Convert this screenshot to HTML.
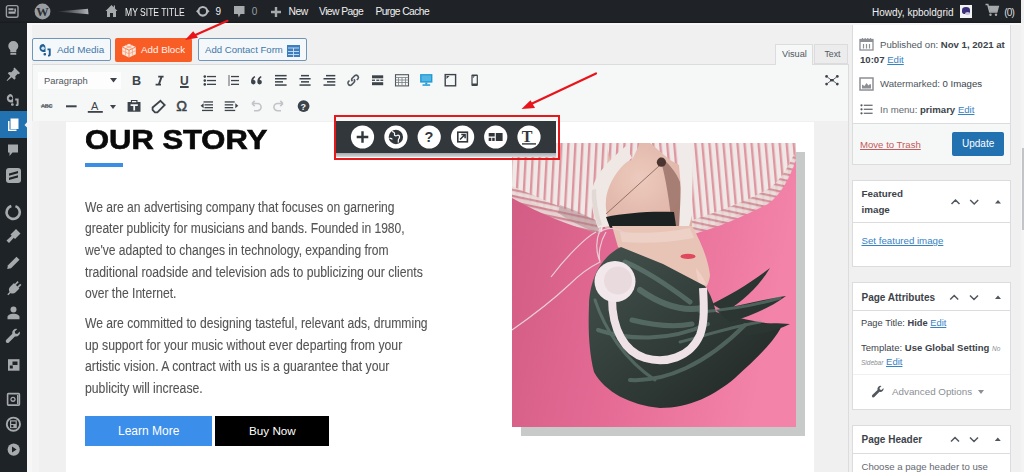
<!DOCTYPE html>
<html><head><meta charset="utf-8">
<style>
*{margin:0;padding:0;box-sizing:border-box}
html,body{width:1024px;height:472px;overflow:hidden;background:#f0f0f1;font-family:"Liberation Sans",sans-serif;color:#3c434a;position:relative}
.a{position:absolute}
.t{position:absolute;white-space:nowrap;line-height:1}
.ab{color:#f0f0f1;font-size:10px}
.btn{position:absolute;border:1.3px solid #6f95b8;border-radius:2px;background:#f5f8fa;color:#2271b1;font-size:9.8px}
.panel{position:absolute;left:852px;width:159px;background:#fff;border:1px solid #dcdcde}
.ph{font-weight:bold;font-size:10px;color:#1d2327}
.lnk{color:#2271b1;text-decoration:underline}
.ptxt{font-size:13.8px;color:#545454;transform-origin:0 0;-webkit-text-stroke:0.1px #555}
svg{overflow:visible}
</style></head><body>
<!-- SIDEBAR -->
<div class="a" style="left:0;top:23px;width:27px;height:449px;background:#1d2327"></div>
<div class="a" style="left:0;top:111px;width:27px;height:27px;background:#2271b1"></div>
<svg class="a" style="left:0;top:0;z-index:5" width="27" height="472" viewBox="0 0 27 472">
 <g fill="#a7aaad">
  <!-- bulb -->
  <path d="M13.3 41a5 5 0 0 0-5 5c0 2 1.2 3 2 4.3v2h6v-2c.8-1.3 2-2.3 2-4.3a5 5 0 0 0-5-5z"/>
  <rect x="10.3" y="53" width="6" height="1.8" rx="0.6"/>
  <!-- pin -->
  <path d="M14.5 67.5l5.5 5.5-1.2 1.2-1-.4-2.5 2.5.3 2.2-1.3 1.3-2.6-2.6-4.5 3.8-.6-.6 3.8-4.5-2.6-2.6 1.3-1.3 2.2.3 2.5-2.5-.4-1z"/>
  <!-- media -->
  <path d="M11 94a4.2 4.2 0 0 0-4.2 4.2c0 2.3 1.7 4 3.7 4.2h2.6v-4.2a4.2 4.2 0 0 0-2.1-4.2z"/>
  <rect x="11" y="103.2" width="2.7" height="2.6" rx="1"/>
  <path d="M15.2 98.6h3.4v6c0 1-.6 1.5-1.6 1.5h-1.2v-1.8h.9v-3.9h-1.5z"/>
  <!-- comment -->
  <path d="M8 144.5h10v8h-5.5l-3 3.5v-3.5H8z"/>
  <!-- S box -->
  <rect x="6" y="168" width="15" height="15" rx="3"/>
  <!-- ring -->
  <circle cx="13.2" cy="212.3" r="6.6" fill="none" stroke="#a7aaad" stroke-width="2.6" stroke-dasharray="37 4.5" transform="rotate(-70 13.2 212.3)"/>
  <!-- brush -->
  <path d="M16 229l4.5 4.5-5.5 5.5-1.2-1.2-4.8 5.2-2.5-2.5 5.2-4.8-1.2-1.2z"/>
  <!-- pencil -->
  <path d="M16.5 256.8l3 3-8.5 8.5-3.8.8.8-3.8z"/>
  <!-- plugin -->
  <path d="M17.5 281l1.2 1.2-2.8 2.8 1.5 1.5 2.8-2.8 1.2 1.2-2.8 2.8.8.8-4 4c-1.5 1.5-3.5 1.3-4.8.4l-2.3 2.3-1-1 2.3-2.3c-.9-1.3-1.1-3.3.4-4.8l4-4 .8.8z"/>
  <!-- user -->
  <circle cx="13.5" cy="309.5" r="3"/>
  <path d="M7.5 319.3v-2.3c0-1.8 2.5-3.2 6-3.2s6 1.4 6 3.2v2.3z"/>
  <!-- wrench -->
  <path d="M19.8 331.5l-2.6 2.6-2-.5-.5-2 2.6-2.6a4 4 0 0 0-5 4.8l-6 6a1.8 1.8 0 0 0 2.6 2.6l6-6a4 4 0 0 0 4.9-4.9z"/>
  <!-- settings square -->
  <rect x="8" y="359.2" width="11.5" height="11.5"/>
  <!-- square circle -->
  <rect x="7.6" y="393.6" width="11.8" height="11.5" rx="0.8" fill="none" stroke="#a7aaad" stroke-width="1.6"/><circle cx="13" cy="399.3" r="2.6"/><rect x="17" y="395" width="1.5" height="9"/>
  <!-- circle square -->
  <circle cx="13.4" cy="424.2" r="6.6" fill="none" stroke="#a7aaad" stroke-width="1.9"/><rect x="10" y="420.3" width="6.8" height="7.8"/>
  <!-- play -->
  <circle cx="13.7" cy="449.6" r="6.1"/>
 </g>
 <g fill="#1d2327">
  <path d="M9 173.5l9-2.5v2.2l-9 2.5zM9 177.8l9-2.5v2.2l-9 2.5z"/>
  <rect x="12.5" y="361.5" width="5" height="3.5"/><rect x="9.8" y="365.5" width="3" height="3"/>
  <circle cx="13" cy="399.3" r="1.3"/>
  <rect x="11.2" y="421.5" width="4.4" height="2.5" fill="#1d2327"/><rect x="11.2" y="425" width="2.2" height="2.2" fill="#1d2327"/>
  <path d="M12 446.6v6l4.6-3z"/>
 </g>
 
 <circle cx="10.6" cy="98.3" r="1.7" fill="#1d2327"/>
 
 <!-- pages active -->
 <path d="M10.5 118.5h8v10.5h-8z" fill="#fff"/>
 <path d="M8 121h1.5v8.5h7v1.5H8z" fill="#fff"/>
 <path d="M24.5 124.9l2.5-2.6v5.2z" fill="#f0f0f1"/>
</svg>
<!-- EDITOR -->
<div class="a" style="left:27px;top:23px;width:5px;height:449px;background:#f7f7f7"></div>
<div class="a" style="left:27px;top:23px;width:994px;height:2px;background:#f7f7f8;z-index:2"></div>
<!-- buttons -->
<div class="btn" style="left:32px;top:38px;width:79px;height:23px"></div>
<svg class="a" style="left:38px;top:43px" width="15" height="14" viewBox="0 0 15 14"><path d="M5.5 1a4 4 0 0 0-4 4c0 2.2 1.6 3.8 3.5 4h2.5V5a4 4 0 0 0-2-4z" fill="#1f5f93"/><circle cx="5" cy="5.2" r="1.7" fill="#cfe3f3"/><rect x="5.5" y="10" width="2.6" height="2.6" rx="1" fill="#1f5f93"/><path d="M9.5 5.5h3.2v6.3c0 1-.6 1.7-1.6 1.7H10v-1.8h.8V7.3H9.5z" fill="#1f5f93"/></svg>
<div class="t" style="left:57px;top:45px;font-size:9.9px;color:#3f78a9">Add Media</div>
<div class="a" style="left:115px;top:38px;width:77px;height:24px;background:#f95d26;border-radius:2px"></div>
<svg class="a" style="left:121px;top:43px" width="16" height="15" viewBox="0 0 16 15"><path d="M8 .8L14.8 4v7.2L8 14.4 1.2 11.2V4z" fill="#fde6da"/><path d="M1.2 4L8 7.2 14.8 4M8 7.2v7.2" fill="none" stroke="#f07a4c" stroke-width="0.9"/><path d="M4.6 2.4l6.8 3.2M11.4 2.4L4.6 5.6M4.6 5.6v7M11.4 5.6v7M1.2 7.6L8 10.8l6.8-3.2" fill="none" stroke="#f4a07e" stroke-width="0.8"/></svg>
<div class="t" style="left:141px;top:45px;font-size:9.8px;color:#fff3ee">Add Block</div>
<div class="btn" style="left:198px;top:38px;width:109px;height:23px"></div>
<div class="t" style="left:205px;top:45px;font-size:9.6px;color:#3f77a8">Add Contact Form</div>
<svg class="a" style="left:287px;top:45px" width="13" height="12" viewBox="0 0 13 12"><rect x="0" y="0" width="13" height="12" fill="#3d7ec0"/><path d="M1 3h11M1 6.5h11M1 9.5h11M6.5 3v9" stroke="#cfe2f3" stroke-width="0.9"/></svg>

<!-- tabs -->
<div class="a" style="left:775px;top:44px;width:38px;height:21px;background:#f6f7f7;border:1px solid #dcdcde;border-bottom:none;z-index:3"></div>
<div class="t" style="left:782px;top:50px;font-size:9.2px;color:#50575e;z-index:4">Visual</div>
<div class="a" style="left:814px;top:44px;width:34px;height:20px;background:#ececec;border:1px solid #dcdcde"></div>
<div class="t" style="left:824.5px;top:50px;font-size:8.7px;color:#50575e">Text</div>

<!-- toolbar -->
<div class="a" style="left:32px;top:64px;width:817px;height:58px;background:#f6f7f7;border:1px solid #dcdcde;border-left-color:#e6e6e7"></div>
<div class="a" style="left:38px;top:72px;width:83px;height:17px;background:#fdfdfd"></div>
<div class="t" style="left:44px;top:76px;font-size:9.4px;color:#50575e">Paragraph</div>
<svg class="a" style="left:110px;top:78px" width="7" height="5" viewBox="0 0 7 5"><path d="M0 0h7L3.5 4.5z" fill="#3c434a"/></svg>
<div class="t" style="left:132px;top:75px;font-size:12.6px;font-weight:bold;color:#3c434a">B</div>
<svg class="a" style="left:0;top:0" width="200" height="100" viewBox="0 0 200 100"><path d="M158.2 76.6h5.4M155.6 84.6h5.4M161.6 76.6l-2.8 8" stroke="#3c434a" stroke-width="1.9" fill="none"/></svg>
<div class="t" style="left:180px;top:75px;font-size:12px;font-weight:bold;color:#3c434a;text-decoration:underline;text-decoration-thickness:1.8px;text-underline-offset:1px">U</div>
<svg class="a" style="left:0;top:0" width="850" height="125" viewBox="0 0 850 125">
 <g fill="#3c434a">
  <!-- ul -->
  <circle cx="204.8" cy="76.6" r="1.3"/><circle cx="204.8" cy="80.6" r="1.3"/><circle cx="204.8" cy="84.4" r="1.3"/>
  <rect x="207" y="75.9" width="9" height="1.3"/><rect x="207" y="79.9" width="9" height="1.3"/><rect x="207" y="83.7" width="9" height="1.3"/>
  <!-- ol -->
  <rect x="228.4" y="75" width="1.2" height="11" fill="#787c82"/>
  <rect x="231" y="75.9" width="8" height="1.3"/><rect x="231" y="79.9" width="8" height="1.3"/><rect x="231" y="83.7" width="8" height="1.3"/>
  <!-- quote -->
  <path d="M251 82.3c0-3.2 1.2-5.2 3.6-6.2l.7 1.1c-1.2.7-1.8 1.5-1.9 2.6a2.3 2.3 0 1 1-2.4 2.5zM257.3 82.3c0-3.2 1.2-5.2 3.6-6.2l.7 1.1c-1.2.7-1.8 1.5-1.9 2.6a2.3 2.3 0 1 1-2.4 2.5z"/>
  <!-- align left -->
  <rect x="275" y="74.9" width="11.6" height="1.5"/><rect x="275" y="78" width="11.6" height="1.5"/><rect x="275" y="81.1" width="8" height="1.5"/><rect x="275" y="84.3" width="11.6" height="1.5"/>
  <!-- align center -->
  <rect x="301" y="74.9" width="8" height="1.5"/><rect x="299.5" y="78" width="11.1" height="1.5"/><rect x="301" y="81.1" width="8" height="1.5"/><rect x="299.5" y="84.3" width="11.1" height="1.5"/>
  <!-- align right -->
  <rect x="326" y="74.9" width="9.3" height="1.5"/><rect x="323.5" y="78" width="11.8" height="1.5"/><rect x="327" y="81.1" width="8.3" height="1.5"/><rect x="323.5" y="84.3" width="11.8" height="1.5"/>
  <!-- more -->
  <rect x="372" y="75.3" width="11.2" height="3"/><rect x="372" y="79.6" width="3" height="1.3"/><rect x="376.3" y="79.6" width="3" height="1.3"/><rect x="380.4" y="79.6" width="2.8" height="1.3"/><rect x="372" y="82.2" width="11.2" height="3"/>
  <!-- tablet -->
  <rect x="445.2" y="74.6" width="10.4" height="11.2" fill="none" stroke="#3c434a" stroke-width="1.4"/>
  <path d="M446.5 76h3l-3 3z"/>
  <!-- phone -->
  <rect x="471.4" y="74.4" width="6.5" height="11.5" rx="1" fill="#3c434a"/>
  <rect x="472.6" y="76" width="4.1" height="7.5" fill="#f6f7f7"/>
  <path d="M472.8 76.3h2l-2 2z"/>
  <!-- expand -->
  <circle cx="826.6" cy="76.4" r="1.4"/><circle cx="837.3" cy="76.4" r="1.4"/><circle cx="826.6" cy="84.1" r="1.4"/><circle cx="837.3" cy="84.1" r="1.4"/>
  <path d="M827.5 77.2l3 2.2M836.4 77.2l-3 2.2M827.5 83.3l3-2.2M836.4 83.3l-3-2.2" stroke="#50575e" stroke-width="0.9"/>
  <rect x="830" y="79" width="3.8" height="2.4"/>
 </g>
 <!-- link -->
 <path d="M349.5 80.5l-1.2 1.2a2.3 2.3 0 0 0 3.2 3.2l2.4-2.4a2.3 2.3 0 0 0 0-3.2M356.8 80l1.2-1.2a2.3 2.3 0 0 0-3.2-3.2l-2.4 2.4a2.3 2.3 0 0 0 0 3.2" fill="none" stroke="#50575e" stroke-width="1.6"/>
 <!-- kitchen sink -->
 <rect x="395.5" y="74.7" width="13" height="11.2" fill="none" stroke="#50575e" stroke-width="1.1"/>
 <path d="M395.5 77.5h13M395.5 80h13M395.5 82.5h13M398.5 77.5v8.4M402 77.5v8.4M405.5 77.5v8.4" stroke="#787c82" stroke-width="0.8"/>
 <!-- desktop -->
 <rect x="420.1" y="74.1" width="12.3" height="8.5" fill="#1d9bd7"/>
 <rect x="421.5" y="75.4" width="9.5" height="5.8" fill="#8cd0ee" opacity="0.5"/>
 <rect x="425.3" y="82.5" width="2" height="2" fill="#1d9bd7"/><rect x="422.5" y="84.3" width="7.6" height="1.5" fill="#1d9bd7"/>
 <g fill="#3c434a">
  <!-- abc -->
  <text x="41" y="108.3" font-family="Liberation Sans" font-size="5.5" font-weight="bold" fill="#50575e" textLength="11.5">ABC</text>
  <rect x="40.8" y="105.6" width="11.8" height="0.9" fill="#50575e"/>
  <!-- dash -->
  <rect x="66" y="105.3" width="10.6" height="2"/>
  <!-- A -->
  <text x="91" y="109.8" font-family="Liberation Sans" font-size="11" fill="#3c434a">A</text>
  <rect x="87.8" y="111" width="15" height="1.8"/>
  <path d="M110 105h6l-3 4z"/>
  <!-- clipboard -->
  <path d="M127.6 102h3.3v-1.9h6.6v1.9h3v9.8h-12.9z"/>
  <rect x="132" y="101" width="4.3" height="1.3" fill="#f6f7f7"/>
  <path d="M130.6 104.2h7.2v1.8h-2.7v4.5h-1.8v-4.5h-2.7z" fill="#f6f7f7"/>
  <!-- eraser -->
  <path d="M160.5 100.8l4.2 4.2-7.3 7.3h-2.5l-2.3-2.3v-2.5z" fill="none" stroke="#3c434a" stroke-width="1.8"/>
  <!-- omega -->
  <text x="176.2" y="111.4" font-family="Liberation Sans" font-size="14.5" fill="#3c434a" stroke="#3c434a" stroke-width="0.5">Ω</text>
  <!-- outdent -->
  <rect x="203.5" y="101.3" width="9.5" height="1.3"/><rect x="204.5" y="104.2" width="8.5" height="1.3"/><rect x="204.5" y="107" width="8.5" height="1.3"/><rect x="202" y="109.8" width="11" height="1.3"/>
  <path d="M200.6 105.8l3-2.5v5z"/>
  <!-- indent -->
  <rect x="224.7" y="101.3" width="10" height="1.3"/><rect x="224.7" y="104.2" width="8.5" height="1.3"/><rect x="224.7" y="107" width="8.5" height="1.3"/><rect x="224.7" y="109.8" width="10.5" height="1.3"/>
  <path d="M238.3 105.8l-3-2.5v5z"/>
 </g>
 <!-- undo redo -->
 <path d="M252 103.5h5.5a3.6 3.6 0 0 1 0 7.2h-3.5M252 103.5l2.7-2.6M252 103.5l2.7 2.6" fill="none" stroke="#c3c4c7" stroke-width="1.6"/>
 <path d="M283 103.5h-5.5a3.6 3.6 0 0 0 0 7.2h3.5M283 103.5l-2.7-2.6M283 103.5l-2.7 2.6" fill="none" stroke="#c3c4c7" stroke-width="1.6"/>
 <!-- help -->
 <circle cx="303.6" cy="106.1" r="5.9" fill="#3c434a"/>
 <text x="300.6" y="109.6" font-family="Liberation Sans" font-size="9" font-weight="bold" fill="#f6f7f7">?</text>
</svg>

<!-- iframe -->
<div class="a" style="left:32px;top:121px;width:817px;height:351px;background:#f0f0f0;border-right:1px solid #dcdcde"></div>
<div class="a" style="left:32px;top:121px;width:7px;height:351px;background:#f3f3f3"></div>
<div class="a" style="left:66px;top:122px;width:748px;height:350px;background:#fff"></div>
<!-- CONTENT -->
<div class="t" id="ours" style="left:85px;top:126.8px;font-size:26.8px;font-weight:bold;color:#0a0a0a;transform-origin:0 0;transform:scaleX(1.155);-webkit-text-stroke:0.6px #0a0a0a">OUR STORY</div>
<div class="a" style="left:85px;top:163px;width:38px;height:3.5px;background:#3a8ee6"></div>
<div class="ptxt t" style="left:85px;top:200.85px;transform:scaleX(0.8761)">We are an advertising company that focuses on garnering</div>
<div class="ptxt t" style="left:85px;top:222.45px;transform:scaleX(0.8736)">greater publicity for musicians and bands. Founded in 1980,</div>
<div class="ptxt t" style="left:85px;top:244.05px;transform:scaleX(0.8756)">we've adapted to changes in technology, expanding from</div>
<div class="ptxt t" style="left:85px;top:265.65px;transform:scaleX(0.8864)">traditional roadside and television ads to publicizing our clients</div>
<div class="ptxt t" style="left:85px;top:287.25px;transform:scaleX(0.8761)">over the Internet.</div>
<div class="ptxt t" style="left:85px;top:317.15px;transform:scaleX(0.8783)">We are committed to designing tasteful, relevant ads, drumming</div>
<div class="ptxt t" style="left:85px;top:338.75px;transform:scaleX(0.8877)">up support for your music without ever departing from your</div>
<div class="ptxt t" style="left:85px;top:360.35px;transform:scaleX(0.8881)">artistic vision. A contract with us is a guarantee that your</div>
<div class="ptxt t" style="left:85px;top:381.95px;transform:scaleX(0.8878)">publicity will increase.</div>
<div class="a" style="left:85px;top:416px;width:127px;height:30px;background:#3b8eea"></div>
<div class="t" style="left:118px;top:424.5px;font-size:12px;color:#fff">Learn More</div>
<div class="a" style="left:215px;top:416px;width:114px;height:30px;background:#000"></div>
<div class="t" style="left:249px;top:424.5px;font-size:11.7px;color:#fff">Buy Now</div>
<!-- IMAGE -->
<div class="a" style="left:521px;top:152px;width:284px;height:284px;background:#c8c9c9"></div>
<svg class="a" style="left:512px;top:143px;filter:blur(0.5px)" width="284" height="284" viewBox="512 143 284 284">
 <defs>
  <linearGradient id="pk" x1="0" y1="0" x2="1" y2="0.2">
   <stop offset="0" stop-color="#d05b83"/><stop offset="0.5" stop-color="#e56b95"/><stop offset="1" stop-color="#f383a9"/>
  </linearGradient>
  <pattern id="str" width="7" height="10" patternUnits="userSpaceOnUse" patternTransform="rotate(3)">
   <rect width="7" height="10" fill="#f0e8e6"/><rect x="0" width="2.4" height="10" fill="#dc959e"/>
  </pattern>
  <pattern id="str2" width="7" height="10" patternUnits="userSpaceOnUse" patternTransform="rotate(-5)">
   <rect width="7" height="10" fill="#f0e8e6"/><rect x="0" width="2.4" height="10" fill="#de97a0"/>
  </pattern>
  <pattern id="strh" width="10" height="6" patternUnits="userSpaceOnUse" patternTransform="rotate(12)">
   <rect width="10" height="6" fill="#e9dcda"/><rect y="0" width="10" height="2.2" fill="#cf8a92"/>
  </pattern>
  <linearGradient id="hair" x1="0" y1="0" x2="1" y2="1">
   <stop offset="0" stop-color="#44524d"/><stop offset="0.5" stop-color="#313c39"/><stop offset="1" stop-color="#1f2523"/>
  </linearGradient>
  <radialGradient id="skin" cx="0.4" cy="0.4" r="0.7">
   <stop offset="0" stop-color="#eccabd"/><stop offset="1" stop-color="#ddb0a3"/>
  </radialGradient>
 </defs>
 <rect x="512" y="143" width="284" height="284" fill="url(#pk)"/>
 <!-- left shirt -->
 <path d="M512 143H612L606 200 602 232 570 220 540 206 512 194z" fill="url(#str)"/>
 <path d="M512 186C540 198 570 212 602 222L600 234C570 226 540 214 512 198z" fill="url(#strh)" opacity="0.9"/>
 <path d="M560 205c15 5 30 12 40 18l-2 10c-12-4-28-12-40-20z" fill="#a77a80" opacity="0.45"/>
 <!-- right shirt -->
 <path d="M680 143H796V158C790 176 780 194 768 202 740 215 710 228 684 234z" fill="url(#str2)"/>
 <path d="M686 222C712 214 745 202 770 188 780 180 788 168 794 154L796 160C790 178 780 196 768 204 740 218 712 230 686 236z" fill="url(#strh)" opacity="0.85"/>
 <!-- skin neck -->
 <path d="M608 143H690L692 229 640 232 605 228z" fill="url(#skin)"/>
 <!-- top stripes between collars -->
 <path d="M606 143H640L632 160 612 166z" fill="url(#str)"/>
 <path d="M650 143H690L688 170 670 160z" fill="url(#str2)"/>
 <!-- right shadow -->
 <path d="M660 157c8 5 16 15 20 25l2 45-10 2c-2-25-6-50-12-72z" fill="#9c7368" opacity="0.85"/>
 <!-- collars -->
 <path d="M626 146C612 158 596 172 592 190 590 205 594 216 598 228L610 226C606 214 604 202 608 190 612 178 620 166 632 158z" fill="#efe8e4"/>
 <path d="M592 190c-1 12 2 25 6 36l4-1c-4-12-6-24-6-36z" fill="#d8cdca" opacity="0.6"/>
 <path d="M677 143h16l-1 72-4 16-9-3 2-40z" fill="#f0ebe8"/>
 <!-- earring -->
 <circle cx="661.4" cy="162.2" r="4.6" fill="#4a3530"/>
 <path d="M659 166L606 214" stroke="#6d5048" stroke-width="0.7"/>
 <!-- choker -->
 <path d="M606 217c18-4 45-6 68-5l2 14c-22 3-48 5-66 2z" fill="#1c2222"/>
 <!-- face -->
 <path d="M612 226L692 226C700 240 708 258 710 275 709 284 706 288 704 288 680 276 650 262 618 247z" fill="#e8c4b7"/>
 <path d="M620 232c25 2 50 0 70-4l4 10c-22 4-45 6-72 4z" fill="#f0d8d0" opacity="0.6"/>
 <path d="M696 268c4 5 8 10 10 16l-6 2c-2-6-4-12-4-18z" fill="#f2d2c8" opacity="0.8"/>
 <ellipse cx="688" cy="256.4" rx="7.5" ry="2.6" fill="#e0485d"/>
 <!-- hair -->
 <path d="M589 305C590 275 604 255 621 247L663 264 705 286C711 295 714 304 716 312 735 318 760 322 782 326 772 345 752 362 735 378 715 395 690 408 660 408 630 405 605 392 594 372 589 352 588 330 589 305z" fill="url(#hair)"/>
 <path d="M712 304C728 296 748 285 770 268 760 285 745 300 725 312zM716 310C738 306 760 300 786 296 770 308 750 316 730 322zM740 326c15-2 30-4 50-2-12 6-28 10-45 12z" fill="#2b3532"/>
 <g fill="none" stroke="#7a998f" stroke-linecap="round" opacity="0.45"><path d="M625 262c20 8 45 25 65 40" stroke-width="5"/><path d="M598 330c30 10 70 12 110-6" stroke-width="4"/><path d="M630 380c35 2 75-15 115-55" stroke-width="4"/><path d="M700 312c25-2 50-5 80-14" stroke-width="3"/><path d="M640 290c20 14 40 22 62 18" stroke-width="6"/><path d="M595 300c10 30 30 60 60 80" stroke-width="3"/><path d="M680 342c20-5 50-15 80-20" stroke-width="3"/><path d="M632 320c20 5 40 8 60 4" stroke-width="5"/></g>
 <!-- headband -->
 <path d="M612 298C612 330 625 352 645 358 665 364 690 358 700 335 705 322 704 305 703 288" fill="none" stroke="#efe2e7" stroke-width="8"/>
 <!-- cup -->
 <circle cx="615" cy="281.5" r="20.5" fill="#f2e8ec"/>
 <circle cx="618" cy="280.5" r="14" fill="#e9dade"/>
 <!-- cables -->
 <path d="M600 230c-5 12-4 22 0 32-10 5-20 12-30 22-15 14-35 30-58 46M606 232c-6 10-8 22-6 30M600 232c8-6 18-4 26 2M596 232c-10 5-30 25-45 45" fill="none" stroke="#e9cdd6" stroke-width="1.2"/>
</svg>
<!-- FLOATING TOOLBAR -->
<div class="a" style="left:336px;top:152px;width:220px;height:5px;background:linear-gradient(#9a9da2,#d6d7d9)"></div>
<div class="a" style="left:336px;top:121px;width:220px;height:32px;background:#32373c"></div>
<div class="a" style="left:334px;top:115px;width:226px;height:45px;border:2px solid #e3191b;z-index:20"></div>
<svg class="a" style="left:336px;top:121px;z-index:21" width="220" height="32" viewBox="336 121 220 32">
 <g fill="#fff">
  <circle cx="362.5" cy="137" r="11.6"/><circle cx="395.9" cy="137" r="11.6"/><circle cx="429.2" cy="137" r="11.6"/>
  <circle cx="462.6" cy="137" r="11.6"/><circle cx="495.7" cy="137" r="11.6"/><circle cx="529" cy="137" r="11.6"/>
 </g>
 <path d="M362.5 131.2v11.6M356.7 137h11.6" stroke="#32373c" stroke-width="2.4"/>
 <circle cx="395.9" cy="137" r="7.2" fill="#32373c"/>
 <path d="M392 131.5c2 .5 3 1.5 2.5 3-.5 1.2 1.5 1.6 2.5 1 1.5-1 2.8.4 2.5 2-.3 1.3-1.4 1.6-1.2 2.8.2 1 .2 1.8-.5 2.2M389.5 138c1 .6 2.2.4 2.8 1.5" fill="none" stroke="#fff" stroke-width="1.2"/>
 <text x="424.6" y="142.3" font-family="Liberation Sans" font-size="14.5" font-weight="bold" fill="#32373c">?</text>
 <rect x="457.8" y="132.2" width="9.6" height="9.6" fill="none" stroke="#32373c" stroke-width="1.6"/>
 <path d="M460 139.5l5-5M461.3 134.4h3.8v3.8" fill="none" stroke="#32373c" stroke-width="1.5"/>
 <rect x="488.7" y="133" width="6" height="3.5" fill="#32373c"/><rect x="488.7" y="137.8" width="2.6" height="3.2" fill="#32373c"/><rect x="492.2" y="137.8" width="2.5" height="3.2" fill="#32373c"/>
 <rect x="495.8" y="133" width="6.8" height="8" fill="#32373c"/>
 <text x="521.8" y="141.8" font-family="Liberation Serif" font-size="16" font-weight="bold" fill="#32373c">T</text>
 <rect x="522" y="143.2" width="14" height="1.4" fill="#32373c"/>
</svg>
<!-- red arrows -->
<svg class="a" style="left:0;top:0;z-index:60" width="1024" height="472" viewBox="0 0 1024 472">
 <path d="M227.5 20.8L192 36.5" stroke="#e8141a" stroke-width="2.2" stroke-linecap="round"/>
 <path d="M185 40l8.2-8.8 4.8 6.6z" fill="#e8141a"/>
 <path d="M596 73.4L530 104.6" stroke="#e8141a" stroke-width="2.2" stroke-linecap="round"/>
 <path d="M521.5 109l9-8.8 4.5 7.8z" fill="#e8141a"/>
</svg>
<!-- SIDEBAR PANELS -->
<div class="panel" style="top:10px;height:155px"></div>
<div class="a" style="left:853px;top:123px;width:157px;height:41px;background:#f6f7f7;border-top:1px solid #dcdcde"></div>
<div class="a" style="left:863px;top:22px;width:7px;height:2.5px;border-radius:0 0 4px 4px;background:#8c8f94"></div>
<svg class="a" style="left:859px;top:37px" width="15" height="14" viewBox="0 0 15 14"><rect x="1" y="2.5" width="13" height="10.5" fill="none" stroke="#8c8f94" stroke-width="1.3"/><rect x="1" y="2.5" width="13" height="2.5" fill="#8c8f94"/><path d="M3.5 1v3M6.2 1v3M8.8 1v3M11.5 1v3M4.5 7v4.5M7.5 7v4.5M10.5 7v4.5" stroke="#8c8f94" stroke-width="1.2"/></svg>
<div class="t" style="left:880px;top:40px;font-size:9.6px;color:#50575e">Published on: <b style="color:#3c434a">Nov 1, 2021 at</b></div>
<div class="t" style="left:860px;top:55.2px;font-size:9.6px;color:#3c434a"><b>10:07</b> <span class="lnk" style="color:#3582c4">Edit</span></div>
<svg class="a" style="left:859px;top:77px" width="15" height="14" viewBox="0 0 15 14"><rect x="1" y="1" width="13" height="12" fill="none" stroke="#8c8f94" stroke-width="1.5"/><path d="M3 11.5v-4l2.5 1.5 2-3 2 2.5 1.5-1.5 1 .5v4z" fill="#8c8f94"/></svg>
<div class="t" style="left:880px;top:79.3px;font-size:9.6px;color:#50575e">Watermarked: <span style="color:#3c434a">0 Images</span></div>
<svg class="a" style="left:860px;top:104px" width="13" height="11" viewBox="0 0 13 11"><g fill="#50575e"><circle cx="1.5" cy="1.3" r="1.1"/><circle cx="1.5" cy="5.3" r="1.1"/><circle cx="1.5" cy="9.3" r="1.1"/><rect x="3.8" y="0.7" width="8.8" height="1.1"/><rect x="3.8" y="4.7" width="8.8" height="1.1"/><rect x="3.8" y="8.7" width="8.8" height="1.1"/></g></svg>
<div class="t" style="left:880px;top:104.5px;font-size:9.6px;color:#646970">In menu: <b style="color:#3c434a">primary</b> <span class="lnk" style="color:#3582c4">Edit</span></div>
<div class="t lnk" style="left:860px;top:139.5px;font-size:9.6px;color:#c45a5b">Move to Trash</div>
<div class="a" style="left:952px;top:132px;width:52px;height:24px;background:#2271b1;border-radius:2px"></div>
<div class="t" style="left:962px;top:139px;font-size:10px;color:#fff">Update</div>

<div class="panel" style="top:180px;height:87px"></div>
<div class="a" style="left:853px;top:222px;width:157px;height:1px;background:#dcdcde"></div>
<div class="t ph" style="left:861.5px;top:189.3px;font-size:9.8px;color:#3c434a">Featured</div>
<div class="t ph" style="left:861.5px;top:205px;font-size:9.8px;color:#3c434a">image</div>
<div class="t lnk" style="left:861.5px;top:236px;font-size:9.7px;color:#3582c4">Set featured image</div>

<div class="panel" style="top:282px;height:128px"></div>
<div class="a" style="left:853px;top:310px;width:157px;height:1px;background:#dcdcde"></div>
<div class="t ph" style="left:861.5px;top:292.5px;font-size:10px;color:#3c434a">Page Attributes</div>
<div class="t" style="left:861px;top:319px;font-size:9.3px;color:#3c434a">Page Title: <b>Hide</b> <span class="lnk" style="color:#3582c4">Edit</span></div>
<div class="t" style="left:861px;top:343px;font-size:9.5px;color:#3c434a">Template: <b>Use Global Setting</b> <i style="font-size:6.5px;color:#8c8f94">No</i></div>
<div class="t" style="left:861px;top:356.5px;font-size:9.5px;color:#3c434a"><i style="font-size:6.5px;color:#8c8f94">Sidebar</i> <span class="lnk" style="color:#3582c4">Edit</span></div>
<div class="a" style="left:853px;top:374px;width:157px;height:1px;background:#f0f0f1"></div>
<svg class="a" style="left:871px;top:385px" width="13" height="13" viewBox="0 0 13 13"><path d="M12.5 3l-2 2-1.6-.4-.4-1.6 2-2a3.2 3.2 0 0 0-4 3.9L1.3 10a1.4 1.4 0 0 0 2 2l5.2-5.2A3.2 3.2 0 0 0 12.5 3z" fill="#50575e"/></svg>
<div class="t" style="left:892px;top:387px;font-size:9.8px;color:#8c8f94">Advanced Options</div>
<svg class="a" style="left:978px;top:390px" width="6" height="5" viewBox="0 0 6 5"><path d="M0 0h6L3 4z" fill="#8c8f94"/></svg>

<div class="panel" style="top:425px;height:60px"></div>
<div class="a" style="left:853px;top:453px;width:157px;height:1px;background:#dcdcde"></div>
<div class="t ph" style="left:861.5px;top:435px;font-size:10px;color:#3c434a">Page Header</div>
<div class="t" style="left:861.5px;top:461.5px;font-size:9.6px;color:#646970">Choose a page header to use</div>

<svg class="a" style="left:940px;top:190px" width="70" height="260" viewBox="940 190 70 260">
 <g fill="none" stroke="#50575e" stroke-width="1.5">
  <path d="M951.5 204l4-4 4 4M970.2 200l4 4 4-4"/>
  <path d="M950.2 299.5l4-4 4 4M970 295.5l4 4 4-4"/>
  <path d="M951 441.5l4-4 4 4M970 437.5l4 4 4-4"/>
 </g>
 <g fill="#50575e"><path d="M995 203.5l3-3.5 3 3.5zM995 299l3-3.5 3 3.5zM994.8 441l3-3.5 3 3.5z"/></g>
</svg>
<div class="a" style="left:1021px;top:23px;width:3px;height:449px;background:#f4f4f5"></div>
<div class="a" style="left:1021.5px;top:148px;width:2px;height:82px;background:#c3c4c7"></div>
<!-- ADMIN BAR -->
<div class="a" style="left:0;top:0;width:1021px;height:23.4px;background:linear-gradient(#1f2226 0,#1f2226 20.5px,#171a1d 23.4px);z-index:50">
  <!-- boldgrid icon -->
  <svg class="a" style="left:5px;top:4px" width="15" height="15" viewBox="0 0 15 15"><rect x="1.4" y="1.6" width="11.6" height="11.6" rx="1.8" fill="none" stroke="#9a9ea3" stroke-width="1.4"/><path d="M3.5 4.3h5v2h-5zM3.5 7.6h7v2.2h-7zM9.2 4.8l1.4-.6 .6 3.4h-1.6z" fill="#a9adb1"/></svg>
  <!-- wp logo -->
  <svg class="a" style="left:34px;top:3px" width="17" height="17" viewBox="0 0 17 17"><circle cx="8.5" cy="8.5" r="7.9" fill="#9a9ea3"/><text x="2.3" y="12.9" font-family="Liberation Serif" font-weight="bold" font-size="12" fill="#2a2f33" textLength="12.4" lengthAdjust="spacingAndGlyphs">W</text></svg>
  <!-- streak -->
  <svg class="a" style="left:55px;top:7px" width="35" height="9" viewBox="0 0 35 9"><defs><linearGradient id="stk"><stop offset="0" stop-color="#8c8f94" stop-opacity="0"/><stop offset="1" stop-color="#b0b3b7"/></linearGradient></defs><path d="M1 4.5 L33 1.8 L33.5 7.2 Z" fill="url(#stk)"/></svg>
  <!-- home -->
  <svg class="a" style="left:105px;top:4px" width="13" height="14" viewBox="0 0 13 14"><path d="M6.5 1 L0.5 7 L2 7 L2 13 L5 13 L5 9 L8 9 L8 13 L11 13 L11 7 L12.5 7 L10 4.5 L10 1.5 L8.8 1.5 L8.8 3.3 Z" fill="#a7aaad"/></svg>
  <div class="t ab" style="left:124.5px;top:7.3px;font-size:10.5px;color:#f0f0f1;transform-origin:0 0;transform:scaleX(0.815)">MY SITE TITLE</div>
  <!-- updates -->
  <svg class="a" style="left:195px;top:4px" width="16" height="15" viewBox="0 0 16 15"><circle cx="7.8" cy="7.3" r="4.3" fill="none" stroke="#b5b8bc" stroke-width="2.1"/><path d="M1 7.3l3-2.6v5.2zM14.6 7.3l-3 2.6V4.7z" fill="#b5b8bc"/></svg>
  <div class="t ab" style="left:215.5px;top:7.4px;font-size:10px;color:#f0f0f1">9</div>
  <!-- comments -->
  <svg class="a" style="left:233px;top:5px" width="13" height="14" viewBox="0 0 13 14"><path d="M1 1h10.5v8H7.5L5.8 12.5 4.8 9H1z" fill="#a7aaad"/></svg>
  <div class="t ab" style="left:251.8px;top:7.4px;font-size:10px;color:#9a9ea3">0</div>
  <!-- plus -->
  <svg class="a" style="left:270px;top:6px" width="12" height="12" viewBox="0 0 12 12"><path d="M6 1v10M1 6h10" stroke="#a7aaad" stroke-width="2.4"/></svg>
  <div class="t ab" style="left:288.4px;top:7.2px;font-size:10.3px;letter-spacing:-0.4px;color:#f0f0f1">New</div>
  <div class="t ab" style="left:319px;top:7.2px;font-size:10.3px;letter-spacing:-0.55px;color:#f0f0f1">View Page</div>
  <div class="t ab" style="left:375.4px;top:7.2px;font-size:10.3px;letter-spacing:-0.58px;color:#f0f0f1">Purge Cache</div>
  <div class="t ab" style="left:872px;top:7.5px;font-size:10px;color:#f0f0f1">Howdy, kpboldgrid</div>
  <!-- avatar -->
  <div class="a" style="left:959.5px;top:5px;width:12.5px;height:13px;background:#f2f2f4"><div class="a" style="left:2.5px;top:2px;width:8px;height:6.5px;border-radius:50% 50% 40% 40%;background:#3a2f78"></div><div class="a" style="left:5px;top:7px;width:5px;height:3px;border-radius:50%;background:#c9c3dc"></div></div>
  <!-- cart -->
  <svg class="a" style="left:985px;top:3px" width="14" height="14" viewBox="0 0 14 14"><path d="M0.5 1.5h2.3l2 7.5h7l1.5-5.5H4" fill="none" stroke="#a7aaad" stroke-width="1.5"/><path d="M4 4h9l-1.3 4.8H5z" fill="#a7aaad"/><circle cx="5.5" cy="11.8" r="1.2" fill="#a7aaad"/><circle cx="11" cy="11.8" r="1.2" fill="#a7aaad"/></svg>
  <div class="t ab" style="left:1004.2px;top:7.5px;font-size:10px;letter-spacing:-0.75px;color:#dcdcde">(0)</div>
</div>
</body></html>
